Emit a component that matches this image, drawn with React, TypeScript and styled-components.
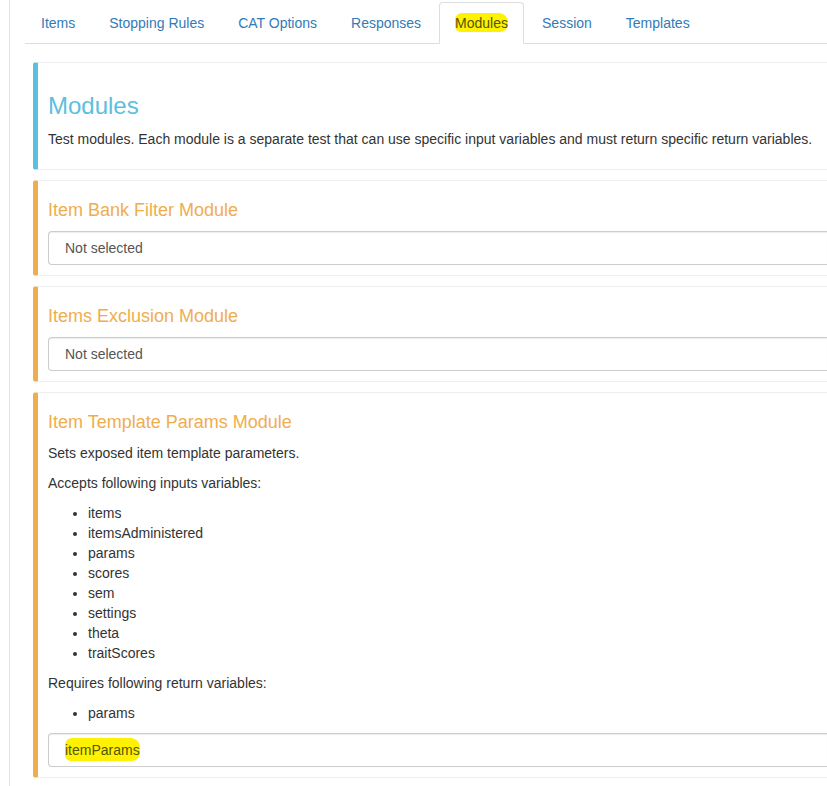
import React from "react";
import styled, { createGlobalStyle } from "styled-components";

const GlobalStyle = createGlobalStyle`
  html, body {
    margin: 0;
    padding: 0;
    overflow: hidden;
    background: #fff;
  }
  body {
    font-family: "Liberation Sans", Arial, Helvetica, sans-serif;
    font-size: 14px;
    line-height: 20px;
    color: #333;
  }
  * { box-sizing: border-box; }
`;

const Page = styled.div`
  margin-left: 9px;
  min-height: 100vh;
  border-left: 1px solid #e3e3e3;
  padding: 2px 0 0 15px;
`;

const Tabs = styled.ul`
  display: flex;
  list-style: none;
  margin: 0;
  padding: 0;
  border-bottom: 1px solid #ddd;
`;

const Tab = styled.li`
  margin-bottom: -1px;
  margin-right: 2px;
`;

const TabLink = styled.a<{ $active?: boolean }>`
  display: block;
  padding: 10px 15px;
  line-height: 20px;
  border: 1px solid ${(p) => (p.$active ? "#ddd" : "transparent")};
  border-bottom-color: transparent;
  border-radius: 4px 4px 0 0;
  background: ${(p) => (p.$active ? "#fff" : "transparent")};
  color: ${(p) => (p.$active ? "#555" : "#337ab7")};
  text-decoration: none;
  cursor: pointer;
`;

const Highlight = styled.span`
  background: #fff200;
  color: #555500;
  border-radius: 7px 9px 8px 6px;
  padding: 2px 0 1px 0;
`;

const TabContent = styled.div`
  padding: 18px 0 0 8px;
`;

/* The panels continue past the right edge of the window in the original,
   so their right-hand border is not visible. */
const Callout = styled.div<{ $color: string }>`
  border: 1px solid #eee;
  border-right: none;
  border-left: 5px solid ${(p) => p.$color};
  border-radius: 3px 0 0 3px;
  padding: 10px 0 10px 10px;
  margin-bottom: 10px;
`;

const PageTitle = styled.h3`
  font-size: 24px;
  font-weight: 500;
  line-height: 1.1;
  color: #5bc0de;
  margin: 20px 0 10px;
`;

const ModuleTitle = styled.h4`
  font-size: 18px;
  font-weight: 500;
  line-height: 1.1;
  color: #f0ad4e;
  margin: 10px 0 10px;
`;

const Para = styled.p`
  margin: 0 0 10px;
  white-space: nowrap;
`;

const VarList = styled.ul`
  margin: 0 0 10px;
  padding-left: 40px;
`;

const Field = styled.div`
  display: flex;
  align-items: center;
  height: 34px;
  padding: 6px 16px;
  border: 1px solid #ccc;
  border-right: none;
  border-radius: 4px 0 0 4px;
  background: #fff;
  color: #555;
  box-shadow: inset 0 1px 1px rgba(0, 0, 0, 0.075);
`;

const Select = styled.select`
  display: block;
  width: 100%;
  height: 34px;
  padding: 6px 16px;
  border: 1px solid #ccc;
  border-right: none;
  border-radius: 4px 0 0 4px;
  background: #fff;
  color: #555;
  font-family: inherit;
  font-size: 14px;
  line-height: 20px;
  appearance: none;
  box-shadow: inset 0 1px 1px rgba(0, 0, 0, 0.075);
  outline: none;
`;

const tabs = ["Items", "Stopping Rules", "CAT Options", "Responses", "Modules", "Session", "Templates"];
const inputs = ["items", "itemsAdministered", "params", "scores", "sem", "settings", "theta", "traitScores"];

export default function App() {
  return (
    <>
      <GlobalStyle />
      <Page>
        <Tabs>
          {tabs.map((t) => (
            <Tab key={t}>
              <TabLink $active={t === "Modules"}>
                {t === "Modules" ? <Highlight>{t}</Highlight> : t}
              </TabLink>
            </Tab>
          ))}
        </Tabs>
        <TabContent>
          <Callout $color="#5bc0de">
            <PageTitle>Modules</PageTitle>
            <Para>
              Test modules. Each module is a separate test that can use specific input variables and must return
              specific return variables.
            </Para>
          </Callout>
          <Callout $color="#f0ad4e">
            <ModuleTitle>Item Bank Filter Module</ModuleTitle>
            <Select defaultValue="">
              <option value="">Not selected</option>
            </Select>
          </Callout>
          <Callout $color="#f0ad4e">
            <ModuleTitle>Items Exclusion Module</ModuleTitle>
            <Select defaultValue="">
              <option value="">Not selected</option>
            </Select>
          </Callout>
          <Callout $color="#f0ad4e">
            <ModuleTitle>Item Template Params Module</ModuleTitle>
            <Para>Sets exposed item template parameters.</Para>
            <Para>Accepts following inputs variables:</Para>
            <VarList>
              {inputs.map((v) => (
                <li key={v}>{v}</li>
              ))}
            </VarList>
            <Para>Requires following return variables:</Para>
            <VarList>
              <li>params</li>
            </VarList>
            <Field>
              <Highlight>itemParams</Highlight>
            </Field>
          </Callout>
        </TabContent>
      </Page>
    </>
  );
}
